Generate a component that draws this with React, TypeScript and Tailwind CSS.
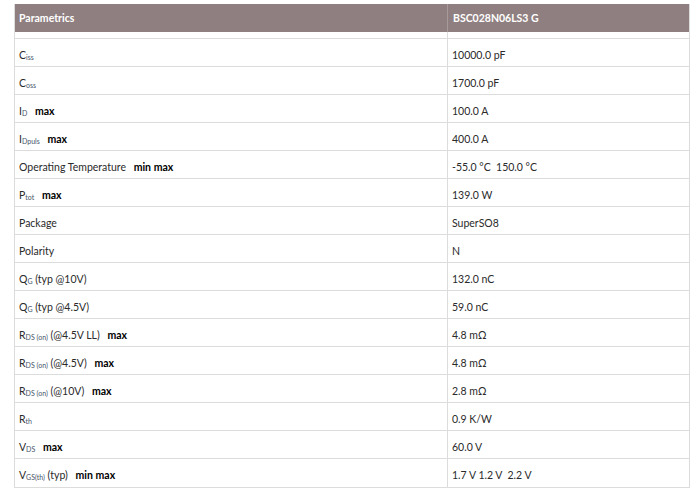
import React from "react";

type Row = { label: React.ReactNode; value: React.ReactNode };

const S = ({ children }: { children: React.ReactNode }) => (
  <sub className="text-[7px] text-[#44546a] relative top-[1px] align-baseline">{children}</sub>
);
const B = ({ children }: { children: React.ReactNode }) => (
  <b className="font-bold text-black ml-[5px]">{children}</b>
);

const rows: Row[] = [
  { label: <>C<S>iss</S></>, value: "10000.0 pF" },
  { label: <>C<S>oss</S></>, value: "1700.0 pF" },
  { label: <>I<S>D</S> <B>max</B></>, value: "100.0 A" },
  { label: <>I<S>Dpuls</S> <B>max</B></>, value: "400.0 A" },
  { label: <>Operating Temperature <B>min</B> <b className="font-bold text-black">max</b></>, value: <>-55.0 °C&nbsp; 150.0 °C</> },
  { label: <>P<S>tot</S> <B>max</B></>, value: "139.0 W" },
  { label: "Package", value: "SuperSO8" },
  { label: "Polarity", value: "N" },
  { label: <>Q<S>G</S> (typ @10V)</>, value: "132.0 nC" },
  { label: <>Q<S>G</S> (typ @4.5V)</>, value: "59.0 nC" },
  { label: <>R<S>DS (on)</S> (@4.5V LL) <B>max</B></>, value: "4.8 mΩ" },
  { label: <>R<S>DS (on)</S> (@4.5V) <B>max</B></>, value: "4.8 mΩ" },
  { label: <>R<S>DS (on)</S> (@10V) <B>max</B></>, value: "2.8 mΩ" },
  { label: <>R<S>th</S></>, value: "0.9 K/W" },
  { label: <>V<S>DS</S> <B>max</B></>, value: "60.0 V" },
  { label: <>V<S>GS(th)</S> (typ) <B>min</B> <b className="font-bold text-black">max</b></>, value: <>1.7 V 1.2 V&nbsp; 2.2 V</> },
];

export default function App() {
  return (
    <div
      className="w-[700px] h-[495px] bg-white pt-[4px] pl-[14px] text-[10.5px] text-[#2a2a2a]"
      style={{ fontFamily: "Lato, 'Open Sans', sans-serif" }}
    >
      <div className="w-[676px] border border-[#dcdcdc] border-t-0">
        <div className="flex h-[28px] bg-[#8f7f80] text-white font-bold">
          <div className="w-[433px] border-r border-[#a89a9b] pl-[4px] pt-[2px] flex items-center">Parametrics</div>
          <div className="flex-1 pl-[5px] pt-[2px] flex items-center">BSC028N06LS3 G</div>
        </div>
        <div className="flex h-[7px] border-b border-[#dcdcdc]">
          <div className="w-[433px] border-r border-[#dcdcdc]" />
          <div className="flex-1" />
        </div>
        {rows.map((r, i) => (
          <div
            key={i}
            className={`flex h-[28px] ${i < rows.length - 1 ? "border-b border-[#dcdcdc]" : ""}`}
          >
            <div className="w-[433px] border-r border-[#dcdcdc] pl-[4px] pt-[6px] flex items-center whitespace-nowrap">
              <span>{r.label}</span>
            </div>
            <div className="flex-1 pl-[4px] pt-[6px] flex items-center whitespace-nowrap">{r.value}</div>
          </div>
        ))}
      </div>
    </div>
  );
}
